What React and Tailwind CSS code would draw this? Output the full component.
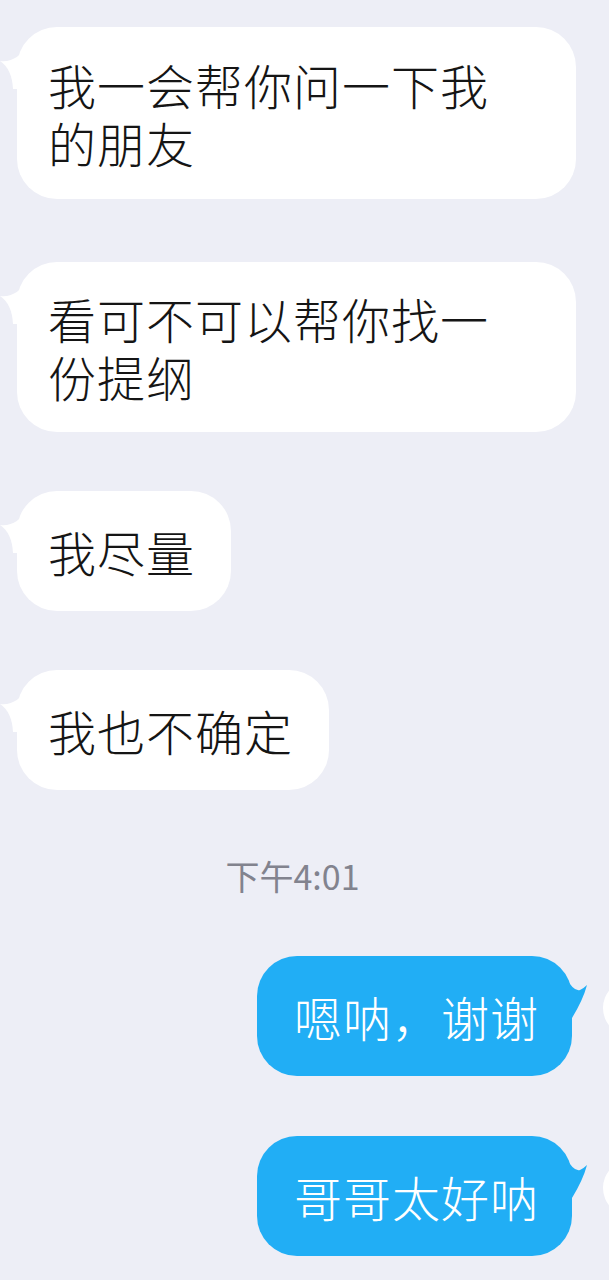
import React from 'react';

const FONT = { fontFamily: '"Noto Sans CJK SC", "Noto Sans", sans-serif' };

const LeftTail = () => (
  <svg className="absolute left-[-17px] top-[16px]" width="28" height="46" viewBox="0 0 28 46">
    <path d="M28 0 Q18 20 0 18 Q12 26 13 46 L28 46 Z" fill="#ffffff" />
  </svg>
);

const RightTail = () => (
  <svg className="absolute right-[-20px] top-[20px]" width="26" height="44" viewBox="0 0 26 44">
    <path d="M0 2 Q8 16 14 14 Q18 12 21 9 Q17 24 6 42 L0 42 Z" fill="#21aef5" />
  </svg>
);

const Incoming = ({ text, className }) => (
  <div
    className={`relative rounded-[40px] bg-white pl-[31px] text-[48px] font-light leading-[58px] tracking-[1px] text-[#151515] ${className}`}
  >
    <LeftTail />
    <span className="relative">{text}</span>
  </div>
);

const Outgoing = ({ text }) => (
  <div className="relative mt-[60px] mr-[37px] flex h-[120px] w-[315px] items-center rounded-[40px] bg-[#21aef5] pl-[37px] text-[48px] font-light leading-[58px] tracking-[1px] text-white">
    <RightTail />
    {text}
    <div className="absolute right-[-91px] top-[24px] h-[56px] w-[60px] rounded-full bg-white" />
  </div>
);

export default function App() {
  return (
    <div className="relative min-h-[1280px] w-[609px] overflow-hidden bg-[#edeef6]" style={FONT}>
      <div className="flex flex-col items-start pl-[17px] pt-[27px]">
        <Incoming text="我一会帮你问一下我的朋友" className="w-[559px] py-[28px] pr-[68px]" />
        <Incoming text="看可不可以帮你找一份提纲" className="mt-[63px] w-[559px] py-[27px] pr-[68px]" />
        <Incoming text="我尽量" className="mt-[59px] w-fit py-[31px] pr-[36px]" />
        <Incoming text="我也不确定" className="mt-[59px] w-fit py-[31px] pr-[36px]" />
      </div>

      <div className="mt-[66px] pr-[24px] text-center text-[34px] leading-[40px] text-[#82838e]">下午4:01</div>

      <div className="flex flex-col items-end">
        <Outgoing text="嗯呐，谢谢" />
        <Outgoing text="哥哥太好呐" />
      </div>
    </div>
  );
}
